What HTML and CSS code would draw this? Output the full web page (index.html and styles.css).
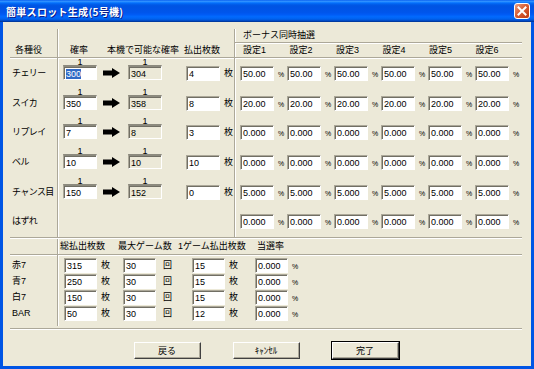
FILE: index.html
```html
<!DOCTYPE html>
<html lang="ja">
<head>
    <meta charset="UTF-8">
    <meta name="viewport" content="width=device-width, initial-scale=1.0">
    <title>簡単スロット生成(5号機)</title>
    <link rel="stylesheet" href="styles.css">
</head>
<body>

<div class="window">
    <div class="titlebar">
        <span class="title">簡単スロット生成(5号機)</span>
        <span class="close-btn">
            <svg width="14" height="14" viewBox="0 0 14 14"><path d="M3.5 3.5 L10.5 10.5 M10.5 3.5 L3.5 10.5" stroke="#fff" stroke-width="2" stroke-linecap="square"/></svg>
        </span>
    </div>

    <div class="frame">
        <div class="dialog">

            <!-- 上段: 各種役 -->
            <section class="upper">
                <div class="col col-names">
                    <div class="col-head">各種役</div>
                    <div class="rows">
                        <div class="row">チェリー</div>
                        <div class="row">スイカ</div>
                        <div class="row">リプレイ</div>
                        <div class="row">ベル</div>
                        <div class="row">チャンス目</div>
                        <div class="row">はずれ</div>
                    </div>
                </div>

                <div class="col col-rate">
                    <div class="col-head">
                        <span class="hc hc-rate">確率</span>
                        <span class="hc hc-real">本機で可能な確率</span>
                        <span class="hc hc-pay">払出枚数</span>
                    </div>
                    <div class="rows">
                        <div class="row">
                            <div class="frac"><span class="one">1</span><span class="field"><span class="sel">300</span></span></div>
                            <svg class="arrow" width="17" height="10" viewBox="0 0 17 10"><polygon points="0,2.5 9,2.5 9,0 17,5 9,10 9,7.5 0,7.5" fill="#000"/></svg>
                            <div class="frac"><span class="one">1</span><span class="field ro">304</span></div>
                            <span class="field pay">4</span><span class="unit">枚</span>
                        </div>
                        <div class="row">
                            <div class="frac"><span class="one">1</span><span class="field">350</span></div>
                            <svg class="arrow" width="17" height="10" viewBox="0 0 17 10"><polygon points="0,2.5 9,2.5 9,0 17,5 9,10 9,7.5 0,7.5" fill="#000"/></svg>
                            <div class="frac"><span class="one">1</span><span class="field ro">358</span></div>
                            <span class="field pay">8</span><span class="unit">枚</span>
                        </div>
                        <div class="row">
                            <div class="frac"><span class="one">1</span><span class="field">7</span></div>
                            <svg class="arrow" width="17" height="10" viewBox="0 0 17 10"><polygon points="0,2.5 9,2.5 9,0 17,5 9,10 9,7.5 0,7.5" fill="#000"/></svg>
                            <div class="frac"><span class="one">1</span><span class="field ro">8</span></div>
                            <span class="field pay">3</span><span class="unit">枚</span>
                        </div>
                        <div class="row">
                            <div class="frac"><span class="one">1</span><span class="field">10</span></div>
                            <svg class="arrow" width="17" height="10" viewBox="0 0 17 10"><polygon points="0,2.5 9,2.5 9,0 17,5 9,10 9,7.5 0,7.5" fill="#000"/></svg>
                            <div class="frac"><span class="one">1</span><span class="field ro">10</span></div>
                            <span class="field pay">10</span><span class="unit">枚</span>
                        </div>
                        <div class="row">
                            <div class="frac"><span class="one">1</span><span class="field">150</span></div>
                            <svg class="arrow" width="17" height="10" viewBox="0 0 17 10"><polygon points="0,2.5 9,2.5 9,0 17,5 9,10 9,7.5 0,7.5" fill="#000"/></svg>
                            <div class="frac"><span class="one">1</span><span class="field ro">152</span></div>
                            <span class="field pay">0</span><span class="unit">枚</span>
                        </div>
                        <div class="row"></div>
                    </div>
                </div>

                <div class="col col-bonus">
                    <div class="bonus-title">ボーナス同時抽選</div>
                    <div class="bonus-head">
                        <span>設定1</span><span>設定2</span><span>設定3</span>
                        <span>設定4</span><span>設定5</span><span>設定6</span>
                    </div>
                    <div class="rows">
                        <div class="row">
                            <span class="field">50.00</span><span class="pct">%</span>
                            <span class="field">50.00</span><span class="pct">%</span>
                            <span class="field">50.00</span><span class="pct">%</span>
                            <span class="field">50.00</span><span class="pct">%</span>
                            <span class="field">50.00</span><span class="pct">%</span>
                            <span class="field">50.00</span><span class="pct">%</span>
                        </div>
                        <div class="row">
                            <span class="field">20.00</span><span class="pct">%</span>
                            <span class="field">20.00</span><span class="pct">%</span>
                            <span class="field">20.00</span><span class="pct">%</span>
                            <span class="field">20.00</span><span class="pct">%</span>
                            <span class="field">20.00</span><span class="pct">%</span>
                            <span class="field">20.00</span><span class="pct">%</span>
                        </div>
                        <div class="row">
                            <span class="field">0.000</span><span class="pct">%</span>
                            <span class="field">0.000</span><span class="pct">%</span>
                            <span class="field">0.000</span><span class="pct">%</span>
                            <span class="field">0.000</span><span class="pct">%</span>
                            <span class="field">0.000</span><span class="pct">%</span>
                            <span class="field">0.000</span><span class="pct">%</span>
                        </div>
                        <div class="row">
                            <span class="field">0.000</span><span class="pct">%</span>
                            <span class="field">0.000</span><span class="pct">%</span>
                            <span class="field">0.000</span><span class="pct">%</span>
                            <span class="field">0.000</span><span class="pct">%</span>
                            <span class="field">0.000</span><span class="pct">%</span>
                            <span class="field">0.000</span><span class="pct">%</span>
                        </div>
                        <div class="row">
                            <span class="field">5.000</span><span class="pct">%</span>
                            <span class="field">5.000</span><span class="pct">%</span>
                            <span class="field">5.000</span><span class="pct">%</span>
                            <span class="field">5.000</span><span class="pct">%</span>
                            <span class="field">5.000</span><span class="pct">%</span>
                            <span class="field">5.000</span><span class="pct">%</span>
                        </div>
                        <div class="row">
                            <span class="field">0.000</span><span class="pct">%</span>
                            <span class="field">0.000</span><span class="pct">%</span>
                            <span class="field">0.000</span><span class="pct">%</span>
                            <span class="field">0.000</span><span class="pct">%</span>
                            <span class="field">0.000</span><span class="pct">%</span>
                            <span class="field">0.000</span><span class="pct">%</span>
                        </div>
                    </div>
                </div>
            </section>

            <!-- 下段: ボーナス -->
            <section class="lower">
                <div class="lower-inner">
                    <div class="lcol lcol-names">
                        <div class="lcol-head"></div>
                        <div class="lrows">
                            <div class="lrow">赤7</div>
                            <div class="lrow">青7</div>
                            <div class="lrow">白7</div>
                            <div class="lrow">BAR</div>
                        </div>
                    </div>
                    <div class="lcol lcol-data">
                        <div class="lcol-head">
                            <span class="lh lh-total">総払出枚数</span>
                            <span class="lh lh-games">最大ゲーム数</span>
                            <span class="lh lh-pergame">1ゲーム払出枚数</span>
                            <span class="lh">当選率</span>
                        </div>
                        <div class="lrows">
                            <div class="lrow">
                                <span class="field">315</span><span class="u u1">枚</span>
                                <span class="field">30</span><span class="u u2">回</span>
                                <span class="field">15</span><span class="u u3">枚</span>
                                <span class="field">0.000</span><span class="u u4">%</span>
                            </div>
                            <div class="lrow">
                                <span class="field">250</span><span class="u u1">枚</span>
                                <span class="field">30</span><span class="u u2">回</span>
                                <span class="field">15</span><span class="u u3">枚</span>
                                <span class="field">0.000</span><span class="u u4">%</span>
                            </div>
                            <div class="lrow">
                                <span class="field">150</span><span class="u u1">枚</span>
                                <span class="field">30</span><span class="u u2">回</span>
                                <span class="field">15</span><span class="u u3">枚</span>
                                <span class="field">0.000</span><span class="u u4">%</span>
                            </div>
                            <div class="lrow">
                                <span class="field">50</span><span class="u u1">枚</span>
                                <span class="field">30</span><span class="u u2">回</span>
                                <span class="field">12</span><span class="u u3">枚</span>
                                <span class="field">0.000</span><span class="u u4">%</span>
                            </div>
                        </div>
                    </div>
                </div>
            </section>

            <div class="buttons">
                <button class="btn">戻る</button>
                <button class="btn">ｷｬﾝｾﾙ</button>
                <button class="btn btn-default">完了</button>
            </div>

        </div>
    </div>
</div>

</body>
</html>
```

FILE: styles.css
```css
/* Reset default styles */
* {
    margin: 0;
    padding: 0;
    box-sizing: border-box;
}

body {
    width: 534px;
    height: 369px;
    overflow: hidden;
    font-family: "Liberation Sans", "Noto Sans CJK JP", sans-serif;
    font-size: 9px;
    color: #000;
    background: #fff;
}

.window {
    width: 534px;
    height: 369px;
    display: flex;
    flex-direction: column;
}

/* タイトルバー */
.titlebar {
    height: 22px;
    display: flex;
    align-items: center;
    justify-content: space-between;
    padding: 0 4px 0 6px;
    background: linear-gradient(to bottom,
        #0058ee 0%, #3593ff 5%, #288eff 8%, #127dff 11%, #036ffc 14%,
        #0262ee 18%, #0057e5 24%, #0054e3 30%, #0055eb 56%, #005bf5 66%,
        #026afe 76%, #0062ef 86%, #0052d6 92%, #0040ab 96%, #003092 100%);
}

.title {
    color: #fff;
    font-family: "Noto Sans CJK JP", sans-serif;
    font-size: 10px;
    font-weight: bold;
    letter-spacing: 0.3px;
    text-shadow: 1px 1px 0 #0a1c8a;
}

.close-btn {
    width: 16px;
    height: 16px;
    border: 1px solid #fff;
    border-radius: 3px;
    background: linear-gradient(135deg, #eba083 0%, #d85f36 45%, #c0390e 100%);
    display: flex;
    align-items: center;
    justify-content: center;
}

.frame {
    flex: 1;
    border: 3px solid #0055e5;
    border-top: 0;
    box-shadow: inset 0 0 0 1px #0831d9;
}

.dialog {
    height: 100%;
    background-color: #ece9d8;
    padding: 7px 9px 0 7px;
}

/* 入力欄 */
.field {
    display: block;
    flex-shrink: 0;
    width: 34px;
    height: 15px;
    background: #fff;
    border: 1px solid;
    border-color: #aca899 #fff #fff #aca899;
    box-shadow: inset 1px 1px 0 #716f64;
    padding: 1px 0 0 2px;
    line-height: 12px;
    white-space: nowrap;
    overflow: hidden;
}

.field.ro {
    background: #ece9d8;
}

.sel {
    background: #316ac5;
    color: #fff;
}

/* 上段 */
.upper {
    display: flex;
    border-bottom: 1px solid #aca899;
}

.col-names {
    width: 47px;
    letter-spacing: -0.6px;
}

.col-rate {
    width: 177px;
    border-left: 1px solid #aca899;
    box-shadow: inset 1px 0 0 #fff;
}

.col-bonus {
    width: 288px;
    border-left: 1px solid #aca899;
    box-shadow: inset 1px 0 0 #fff;
}

.col-head {
    height: 29px;
    padding-top: 15px;
    line-height: 13px;
    border-bottom: 1px solid #aca899;
    white-space: nowrap;
}

.col-names .col-head {
    padding-left: 5px;
    letter-spacing: 0;
}

.col-rate .col-head {
    display: flex;
    padding-left: 4px;
}

.hc {
    display: block;
    text-align: center;
}

.hc-rate { width: 34px; }
.hc-real { width: 82px; margin-left: 6px; }
.hc-pay { width: 34px; }

.bonus-title {
    height: 14px;
    line-height: 13px;
    padding-left: 8px;
    border-bottom: 1px solid #aca899;
}

.bonus-head {
    height: 15px;
    display: flex;
    padding-left: 8px;
    line-height: 13px;
    border-top: 1px solid #fff;
    border-bottom: 1px solid #aca899;
}

.bonus-head span {
    width: 47px;
}

.rows {
    height: 179px;
    border-top: 1px solid #fff;
    display: flex;
    flex-direction: column;
}

.row {
    flex: 1;
    display: flex;
    align-items: flex-start;
}

.col-names .row {
    padding: 7px 0 0 2px;
    line-height: 15px;
    white-space: nowrap;
}

.col-rate .row {
    padding-left: 5px;
}

.frac {
    width: 34px;
    display: flex;
    flex-direction: column;
    align-items: center;
}

.one {
    height: 6px;
    line-height: 6px;
}

.frac .field {
    border-top: 2px solid #8c8a7e;
}

.arrow {
    margin: 9px 8px 0 6px;
}

.field.pay {
    margin: 7px 0 0 24px;
}

.unit {
    margin: 7px 0 0 4px;
    line-height: 15px;
}

.col-bonus .row {
    padding-left: 5px;
}

.col-bonus .field {
    margin-top: 7px;
}

.pct {
    width: 13px;
    padding-left: 4px;
    margin-top: 8px;
    font-size: 7px;
    line-height: 15px;
}

/* 下段 */
.lower {
    border-top: 1px solid #fff;
    border-bottom: 1px solid #aca899;
    padding-bottom: 2px;
}

.lower-inner {
    display: flex;
}

.lcol-names {
    width: 47px;
}

.lcol-data {
    flex: 1;
    border-left: 1px solid #aca899;
    box-shadow: inset 1px 0 0 #fff;
}

.lcol-head {
    height: 16px;
    line-height: 15px;
    border-bottom: 1px solid #aca899;
    display: flex;
    padding-left: 2px;
    white-space: nowrap;
}

.lh-total { width: 58px; }
.lh-games { width: 60px; }
.lh-pergame { width: 79px; }

.lrows {
    border-top: 1px solid #fff;
    padding: 2px 0 4px;
}

.lrow {
    height: 16px;
    display: flex;
    line-height: 15px;
}

.lcol-names .lrow {
    padding-left: 2px;
}

.lcol-data .lrows {
    padding-left: 6px;
}

.lrow .field {
    width: 33px;
}

.u {
    padding-left: 4px;
}

.u1 { width: 26px; }
.u2 { width: 36px; padding-left: 7px; }
.u3 { width: 30px; }
.u4 { font-size: 7px; padding-top: 1px; }

/* ボタン */
.buttons {
    border-top: 1px solid #fff;
    padding-top: 12px;
    display: flex;
    justify-content: center;
    gap: 32px;
}

.btn {
    width: 67px;
    height: 17px;
    font-family: "Liberation Sans", "Noto Sans CJK JP", sans-serif;
    font-size: 9px;
    color: #000;
    background-color: #ece9d8;
    border: 1px solid;
    border-color: #fff #404040 #404040 #fff;
    box-shadow: inset -1px -1px 0 #aca899;
}

.btn-default {
    outline: 1px solid #000;
    outline-offset: 0;
}
```
